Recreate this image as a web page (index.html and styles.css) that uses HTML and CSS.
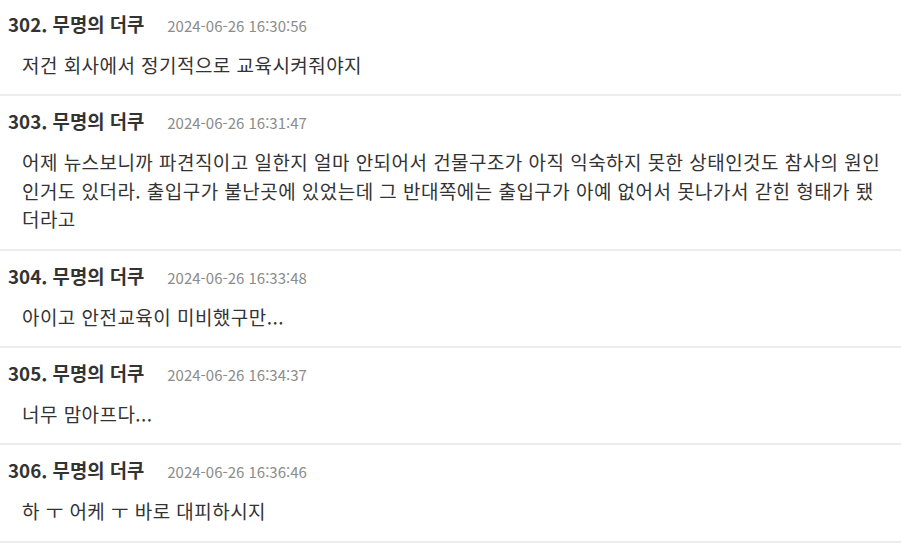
FILE: index.html
```html
<!DOCTYPE html>
<html lang="ko">
<head>
<meta charset="utf-8">
<link rel="stylesheet" href="styles.css">
</head>
<body>
<div class="list">
  <div class="item">
    <div class="head"><span class="name">302. 무명의 더쿠</span><span class="date">2024-06-26 16:30:56</span></div>
    <div class="body">저건 회사에서 정기적으로 교육시켜줘야지</div>
  </div>
  <div class="item">
    <div class="head"><span class="name">303. 무명의 더쿠</span><span class="date">2024-06-26 16:31:47</span></div>
    <div class="body">어제 뉴스보니까 파견직이고 일한지 얼마 안되어서 건물구조가 아직 익숙하지 못한 상태인것도 참사의 원인인거도 있더라. 출입구가 불난곳에 있었는데 그 반대쪽에는 출입구가 아예 없어서 못나가서 갇힌 형태가 됐더라고</div>
  </div>
  <div class="item">
    <div class="head"><span class="name">304. 무명의 더쿠</span><span class="date">2024-06-26 16:33:48</span></div>
    <div class="body">아이고 안전교육이 미비했구만...</div>
  </div>
  <div class="item">
    <div class="head"><span class="name">305. 무명의 더쿠</span><span class="date">2024-06-26 16:34:37</span></div>
    <div class="body">너무 맘아프다...</div>
  </div>
  <div class="item">
    <div class="head"><span class="name">306. 무명의 더쿠</span><span class="date">2024-06-26 16:36:46</span></div>
    <div class="body">하 ㅜ 어케 ㅜ 바로 대피하시지</div>
  </div>
</div>
</body>
</html>
```

FILE: styles.css
```css
html, body {
  margin: 0;
  padding: 0;
  background: #fff;
}
body {
  font-family: "Noto Sans CJK KR", "Noto Sans", sans-serif;
  color: #333;
}
.list {
  display: flex;
  flex-direction: column;
}
.item {
  padding: 11px 17px 14.7px 8px;
  border-bottom: 2px solid #ededed;
}
.item:first-child {
  padding-top: 10px;
}
.head {
  display: flex;
  align-items: baseline;
  line-height: 28px;
  height: 28px;
}
.name {
  font-size: 18.8px;
  font-weight: 700;
  color: #333;
}
.date {
  margin-left: 23px;
  font-size: 15px;
  color: #8c8c8c;
}
.body {
  margin-top: 13px;
  padding-left: 14px;
  font-size: 19px;
  line-height: 28.6px;
  letter-spacing: 0.45px;
  color: #333;
}
```
